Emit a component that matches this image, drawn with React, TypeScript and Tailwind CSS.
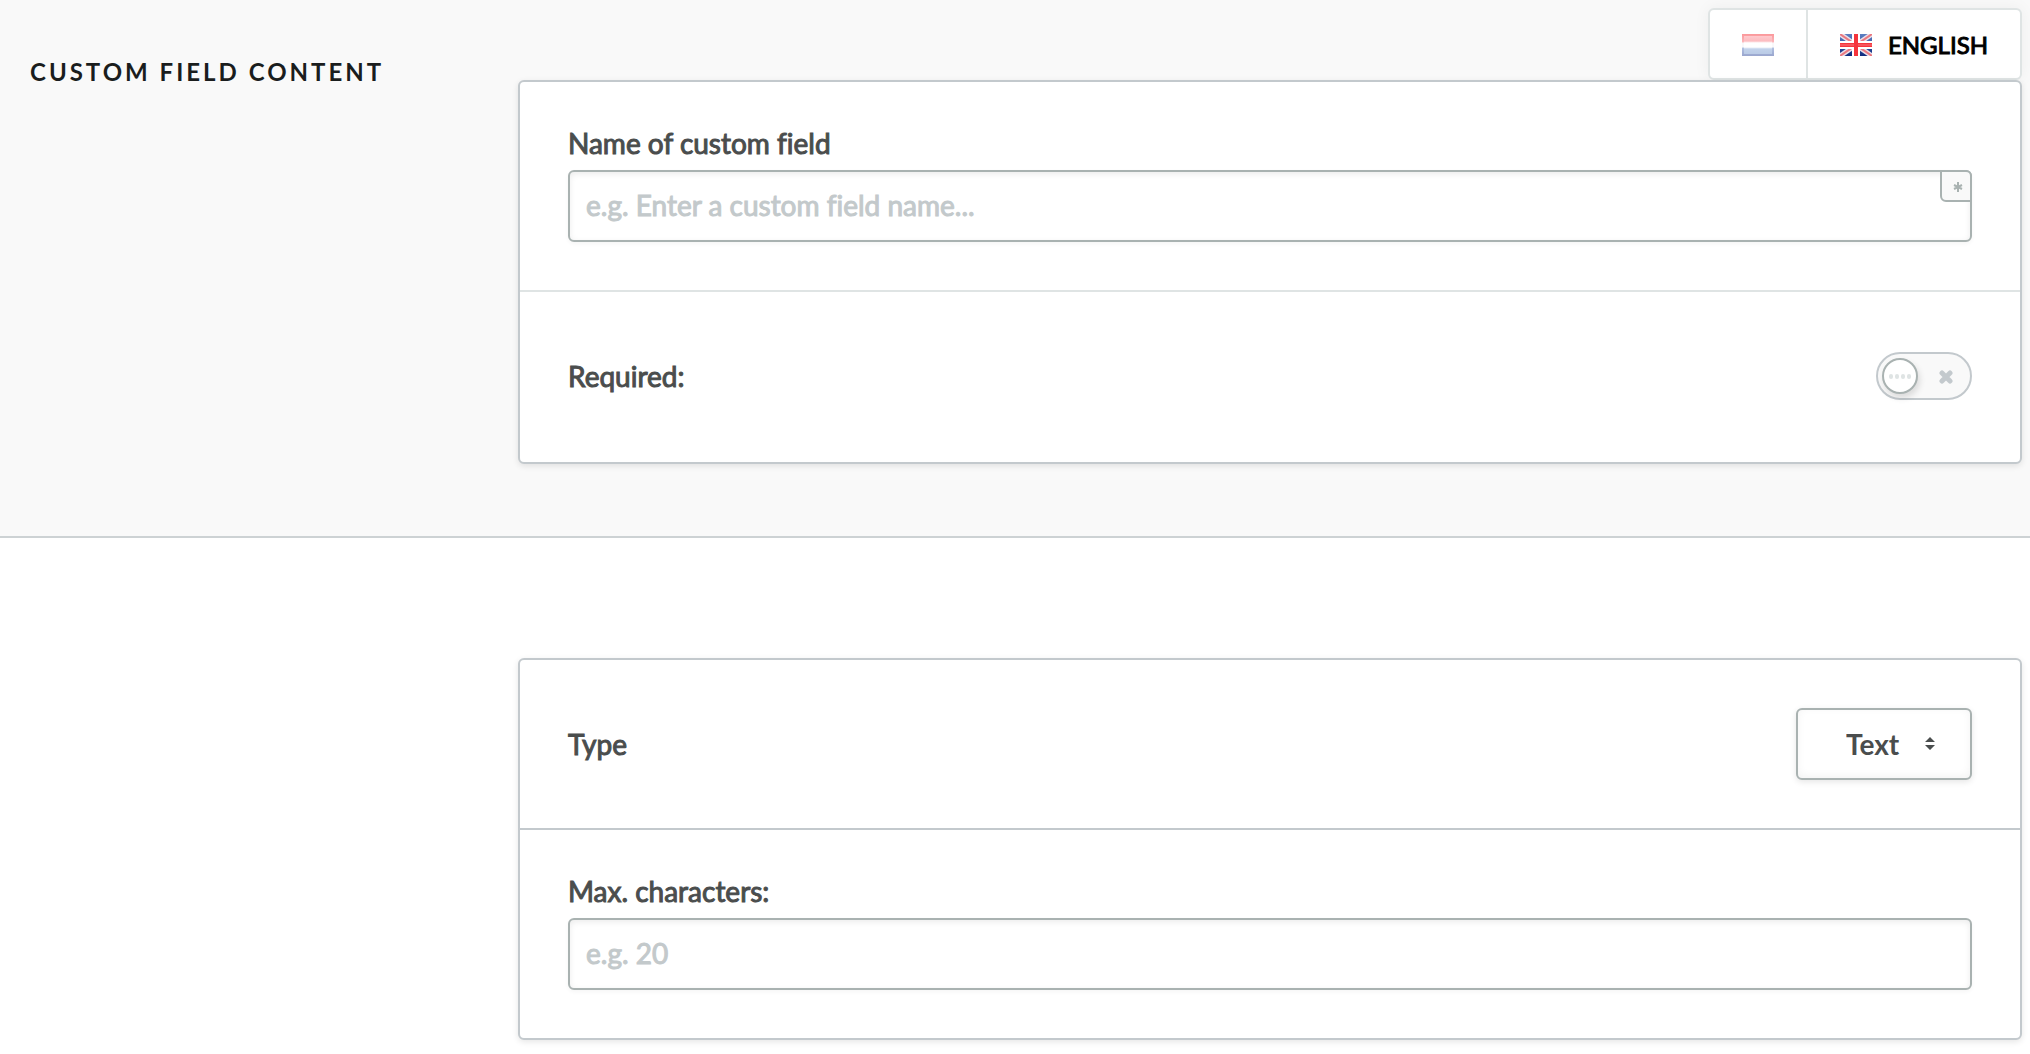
import { useState } from "react";

function DutchFlag() {
  return (
    <svg aria-hidden viewBox="0 0 32 22" className="h-[22px] w-8 opacity-50">
      <defs>
        <linearGradient id="nl-edge" x1="0" y1="0" x2="0" y2="1">
          <stop offset="0" stopColor="#f8343a" />
          <stop offset="0.34" stopColor="#fa6a72" />
          <stop offset="0.42" stopColor="#f6f2f4" />
          <stop offset="0.58" stopColor="#f2f4f8" />
          <stop offset="0.66" stopColor="#5f7fc0" />
          <stop offset="1" stopColor="#38509f" />
        </linearGradient>
        <linearGradient id="nl-face" x1="0" y1="0" x2="0" y2="1">
          <stop offset="0" stopColor="#ff959c" />
          <stop offset="0.28" stopColor="#fb7a82" />
          <stop offset="0.38" stopColor="#fff" />
          <stop offset="0.62" stopColor="#fff" />
          <stop offset="0.72" stopColor="#86a6d8" />
          <stop offset="1" stopColor="#7898cd" />
        </linearGradient>
      </defs>
      <rect width="32" height="22" fill="url(#nl-edge)" />
      <rect x="2" y="2" width="28" height="18" fill="url(#nl-face)" />
    </svg>
  );
}

function BritishFlag() {
  return (
    <svg aria-hidden viewBox="0 0 32 22" className="h-[22px] w-8">
      <defs>
        <linearGradient id="gb-field" x1="0" y1="0" x2="0" y2="1">
          <stop offset="0" stopColor="#5c7fc2" />
          <stop offset="0.5" stopColor="#3558a6" />
          <stop offset="1" stopColor="#0e2a7c" />
        </linearGradient>
      </defs>
      <rect width="32" height="22" fill="url(#gb-field)" />
      <path d="M0 0L32 22M32 0L0 22" stroke="#eadfe8" strokeWidth="5" />
      <path d="M0 0L32 22M32 0L0 22" stroke="#ea7880" strokeWidth="2" />
      <path d="M16 0V22M0 11H32" stroke="#fff" strokeWidth="8" />
      <path d="M16 0V22M0 11H32" stroke="#f5343c" strokeWidth="4" />
      <path d="M0 11H14M18 11H32" stroke="#f8767c" strokeWidth="1" />
    </svg>
  );
}

const heavy = "[-webkit-text-stroke:1px_currentColor] [font-variant-ligatures:none]";

function LanguageTabs() {
  return (
    <div className="flex h-[72px] self-end rounded-md border-2 border-[#dfe4e4] bg-white shadow-[0_0_16px_rgba(0,0,0,0.05)]">
      <button type="button" aria-label="Nederlands" className="border-r-2 border-[#dfe4e4] px-8 pt-[2px]">
        <DutchFlag />
      </button>
      <button type="button" className={`flex items-center gap-4 px-8 pt-[2px] text-2xl text-black ${heavy}`}>
        <BritishFlag />
        ENGLISH
      </button>
    </div>
  );
}

const card = "rounded-md border-2 border-[#c3c9cd] bg-white shadow-[0_2px_6px_rgba(0,0,0,0.1)]";
const label = `text-[28px] text-[#4a4d4d] ${heavy}`;
const fieldLabel = `${label} mb-[14px] block leading-[26px]`;
const input = `block h-[72px] w-full rounded-md border-2 border-[#a9b2b1] bg-white px-4 pb-[2px] text-[28px] text-[#4a4d4d] shadow-[inset_0_2px_6px_rgba(0,0,0,0.08),0_2px_4px_rgba(0,0,0,0.04)] placeholder:text-[#c3c9cb] ${heavy}`;

function Toggle({ id }: { id: string }) {
  const [on, setOn] = useState(false);
  return (
    <span className="relative block h-12 w-24">
      <input
        id={id}
        type="checkbox"
        role="switch"
        checked={on}
        onChange={(e) => setOn(e.target.checked)}
        className="block h-12 w-24 cursor-pointer appearance-none rounded-full border-2 border-[#c3c9cd] bg-[#f9f9f9]"
      />
      <svg aria-hidden viewBox="0 0 14 14" className="pointer-events-none absolute top-[18px] left-[63px] size-[14px]">
        <path d="M3 3L11 11M11 3L3 11" stroke="#c3c9cd" strokeWidth="5" strokeLinecap="round" />
      </svg>
      <span
        className={`pointer-events-none absolute top-[6px] flex size-9 items-center justify-center gap-[2px] rounded-full border-2 border-[#a9b2b1] bg-white shadow-[2px_4px_6px_rgba(0,0,0,0.12)] ${on ? "right-[6px]" : "left-[6px]"}`}
      >
        {[0, 1, 2, 3].map((i) => (
          <span key={i} className="h-[5px] w-1 rounded-full bg-[#dfe4e4]" />
        ))}
      </span>
    </span>
  );
}

export default function App() {
  return (
    <main className="font-[Lato,sans-serif]">
      <section className="flex border-b-2 border-[#cdd2d4] bg-[#f9f9f9] pt-2 pr-2 pb-[72px]">
        <h2 className="w-[518px] shrink-0 pt-12 pl-[30px] text-2xl font-bold tracking-[3px] text-[#1a1d1d]">
          CUSTOM FIELD CONTENT
        </h2>
        <div className="flex flex-1 flex-col">
          <LanguageTabs />
          <div className={card}>
            <div className="border-b-2 border-[#dfe4e4] p-12">
              <label htmlFor="name" className={fieldLabel}>
                Name of custom field
              </label>
              <div className="relative">
                <input id="name" type="text" required placeholder="e.g. Enter a custom field name..." className={input} />
                <span className="absolute top-0 right-0 flex size-8 items-center justify-center rounded-tr-md rounded-bl-md border-2 border-[#a9b2b1] bg-[#f9f9f9] pt-[2px] pl-1">
                  <svg aria-hidden viewBox="0 0 10 10" className="size-[10px]">
                    <path d="M5 0V10M1 3L9 7M9 3L1 7" stroke="#a9b2b1" strokeWidth="2" />
                  </svg>
                </span>
              </div>
            </div>
            <div className="flex min-h-[170px] items-center justify-between px-12 pb-[2px]">
              <label htmlFor="required" className={label}>
                Required:
              </label>
              <Toggle id="required" />
            </div>
          </div>
        </div>
      </section>

      <section className="bg-white pt-[120px] pr-2 pb-3 pl-[518px]">
        <div className={card}>
          <div className="flex items-center justify-between border-b-2 border-[#c3c9cd] p-12">
            <label htmlFor="type" className={label}>
              Type
            </label>
            <div className="relative">
              <select
                id="type"
                className="block h-[72px] w-44 appearance-none rounded-md border-2 border-[#a9b2b1] bg-white pl-12 text-[28px] font-bold text-[#4a4d4d] shadow-[inset_0_-2px_8px_rgba(0,0,0,0.05),0_2px_6px_rgba(0,0,0,0.1)]"
              >
                <option>Text</option>
                <option>Number</option>
                <option>Date</option>
              </select>
              <svg aria-hidden viewBox="0 0 10 14" className="pointer-events-none absolute top-7 right-[37px] h-[14px] w-[10px]">
                <path d="M0 6L5 1L10 6ZM0 9H10L5 14Z" fill="#4a4d4d" />
              </svg>
            </div>
          </div>
          <div className="p-12">
            <label htmlFor="max" className={fieldLabel}>
              Max. characters:
            </label>
            <input id="max" type="text" inputMode="numeric" placeholder="e.g. 20" className={input} />
          </div>
        </div>
      </section>
    </main>
  );
}
